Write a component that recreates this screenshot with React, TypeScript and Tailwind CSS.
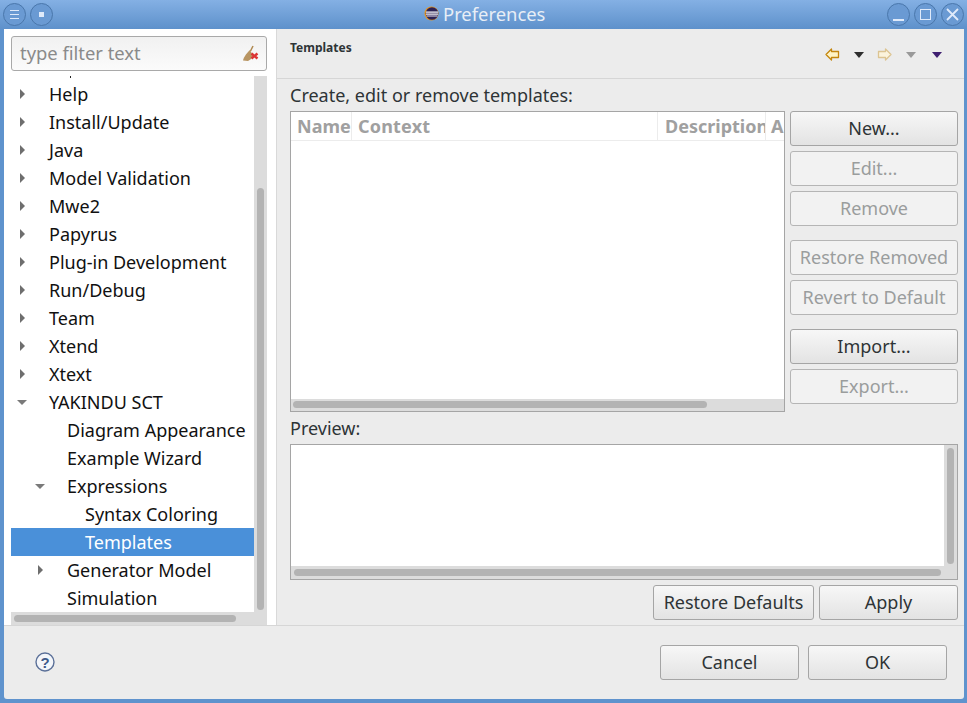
import React from "react";

const font = { fontFamily: '"Noto Sans", sans-serif' };

function WinBtn({ children }: { children: React.ReactNode }) {
  return (
    <div className="w-[23px] h-[23px] rounded-full border border-[#4a77ab] bg-[#6a9ad3] flex items-center justify-center">
      {children}
    </div>
  );
}

const Right = () => (
  <svg width="7" height="12" viewBox="0 0 7 12"><path d="M1 1l5 5-5 5z" fill="#6e6e6e" /></svg>
);
const Down = () => (
  <svg width="12" height="7" viewBox="0 0 12 7"><path d="M1 1h10L6 6z" fill="#7a7a7a" /></svg>
);

type Item = { t: string; lvl: 0 | 1 | 2; a?: "r" | "d"; sel?: boolean };
const items: Item[] = [
  { t: "Help", lvl: 0, a: "r" },
  { t: "Install/Update", lvl: 0, a: "r" },
  { t: "Java", lvl: 0, a: "r" },
  { t: "Model Validation", lvl: 0, a: "r" },
  { t: "Mwe2", lvl: 0, a: "r" },
  { t: "Papyrus", lvl: 0, a: "r" },
  { t: "Plug-in Development", lvl: 0, a: "r" },
  { t: "Run/Debug", lvl: 0, a: "r" },
  { t: "Team", lvl: 0, a: "r" },
  { t: "Xtend", lvl: 0, a: "r" },
  { t: "Xtext", lvl: 0, a: "r" },
  { t: "YAKINDU SCT", lvl: 0, a: "d" },
  { t: "Diagram Appearance", lvl: 1 },
  { t: "Example Wizard", lvl: 1 },
  { t: "Expressions", lvl: 1, a: "d" },
  { t: "Syntax Coloring", lvl: 2 },
  { t: "Templates", lvl: 2, sel: true },
  { t: "Generator Model", lvl: 1, a: "r" },
  { t: "Simulation", lvl: 1 },
];

function Row({ it }: { it: Item }) {
  const pad = it.lvl === 0 ? "pl-[38px]" : it.lvl === 1 ? "pl-[56px]" : "pl-[74px]";
  const arrowPos = it.lvl === 0 ? "left-[4px]" : "left-[22px]";
  return (
    <div className={`relative h-[28px] leading-[28px] whitespace-nowrap ${pad} ${it.sel ? "bg-[#4a90d9] text-white" : "text-[#111]"}`}>
      {it.a && (
        <span className={`absolute ${arrowPos} top-0 h-[28px] w-[14px] flex items-center justify-center`}>
          {it.a === "r" ? <Right /> : <Down />}
        </span>
      )}
      {it.t}
    </div>
  );
}

function Btn({ children, off, w = "w-full" }: { children: React.ReactNode; off?: boolean; w?: string }) {
  return (
    <div
      className={`${w} h-[35px] shrink-0 rounded-[3px] border flex items-center justify-center text-[18px] ${
        off
          ? "border-[#b5b5b5] bg-[#f2f2f2] text-[#9a9d9d]"
          : "border-[#a5a5a5] bg-gradient-to-b from-[#f7f7f7] to-[#e3e3e3] text-[#2e3436]"
      }`}
    >
      {children}
    </div>
  );
}

function Arrow({ dir, fill, stroke }: { dir: "l" | "r"; fill: string; stroke: string }) {
  return (
    <svg width="15" height="13" viewBox="0 0 15 13">
      <path
        d={dir === "l" ? "M6.5 1L1 6.5 6.5 12V9.5H13.5V3.5H6.5z" : "M8.5 1L14 6.5 8.5 12V9.5H1.5V3.5H8.5z"}
        fill={fill}
        stroke={stroke}
        strokeWidth="1.3"
        strokeLinejoin="round"
      />
    </svg>
  );
}

const Tri = ({ c }: { c: string }) => (
  <svg width="10" height="6" viewBox="0 0 10 6"><path d="M0 0h10L5 6z" fill={c} /></svg>
);

export default function App() {
  return (
    <div style={font} className="w-[967px] h-[703px] overflow-hidden bg-[#5f93cd] flex flex-col text-[18px]">
      <div className="h-[29px] shrink-0 bg-gradient-to-b from-[#84b0e4] to-[#5e91cb] flex items-center justify-between pl-[3px] pr-[3px] relative">
        <div className="flex gap-[4px]">
          <WinBtn>
            <div className="flex flex-col gap-[3px]">
              <div className="w-[9px] h-[1px] bg-[#dfeafa]" />
              <div className="w-[9px] h-[1px] bg-[#dfeafa]" />
              <div className="w-[9px] h-[1px] bg-[#dfeafa]" />
            </div>
          </WinBtn>
          <WinBtn><div className="w-[5px] h-[5px] bg-[#dfeafa]" /></WinBtn>
        </div>
        <div className="absolute left-[424px] top-0 h-[29px] flex items-center gap-[4px] text-[#e8eef6] text-[18.4px] leading-[27px] pb-[2px]">
          <svg width="15" height="15" viewBox="0 0 15 15">
            <circle cx="7.5" cy="7.5" r="7" fill="#e8961e" />
            <circle cx="8" cy="7.5" r="6.3" fill="#2c2255" />
            <rect x="2" y="5.5" width="12" height="1.2" fill="#fff" />
            <rect x="2" y="7.5" width="12" height="1.2" fill="#fff" />
            <rect x="2.5" y="9.5" width="11" height="1" fill="#e9e3f2" />
          </svg>
          Preferences
        </div>
        <div className="flex gap-[4px]">
          <WinBtn><div className="w-[11px] h-[2px] bg-[#dfeafa] mt-[11px]" /></WinBtn>
          <WinBtn><div className="w-[11px] h-[11px] border border-[#dfeafa]" /></WinBtn>
          <WinBtn>
            <svg width="13" height="13" viewBox="0 0 13 13"><path d="M1 1l11 11M12 1L1 12" stroke="#dfeafa" strokeWidth="1.8" /></svg>
          </WinBtn>
        </div>
      </div>

      <div className="flex-1 min-h-0 ml-[4px] mr-[3px] mb-[4px] bg-[#ececec] rounded-b-[3px] flex flex-col overflow-hidden">
        <div className="h-[597px] shrink-0 flex border-b border-[#d6d6d6]">
          <div className="w-[273px] shrink-0 bg-white border-r border-[#d9d9d9] pl-[7px] pr-[9px] pt-[7px] flex flex-col">
            <div className="h-[35px] shrink-0 rounded-[3px] border border-[#a9a9a9] bg-gradient-to-b from-[#f1f1f1] to-[#fbfbfb] flex items-center justify-between pl-[8px] pr-[7px] text-[#8a8a8a]">
              <span className="text-[18.4px] leading-[24px] mb-[2px]">type filter text</span>
              <svg width="17" height="17" viewBox="0 0 17 17">
                <path d="M1 15.5C2 11 6 7 8 5l3 5.5c0 2-2 4-5 5.5z" fill="#b89562" />
                <path d="M11 1L8.5 6" stroke="#b08a52" strokeWidth="1.5" />
                <path d="M9.5 8.5l6 5M15.5 8.5l-6 5" stroke="#dc3535" strokeWidth="2.4" />
              </svg>
            </div>
            <div className="mt-[5px] flex-1 min-h-0 flex flex-col">
              <div className="flex-1 min-h-0 flex">
                <div className="flex-1 min-w-0 overflow-hidden relative pt-[4px]">
                  <div className="absolute left-[59px] top-0 w-[1px] h-[2px] bg-[#222]" />
                  {items.map((it) => <Row key={it.t} it={it} />)}
                </div>
                <div className="w-[13px] shrink-0 bg-[#dcdcdc] pl-[3px] pr-[3px] pt-[112px] pb-[1px]">
                  <div className="w-[7px] h-[422px] rounded-full bg-[#b3b3b3]" />
                </div>
              </div>
              <div className="h-[13px] shrink-0 bg-[#dcdcdc] pl-[3px] pt-[3px]">
                <div className="w-[222px] h-[7px] rounded-full bg-[#b3b3b3]" />
              </div>
            </div>
          </div>

          <div className="flex-1 min-w-0 flex flex-col">
            <div className="h-[50px] shrink-0 border-b border-[#d6d6d6] flex items-start justify-between pl-[13px] pr-[22px]">
              <div className="text-[12px] font-bold text-[#2e3436] mt-[11px] leading-[16px]">Templates</div>
              <div className="flex items-center mt-[19px]">
                <Arrow dir="l" fill="#fff3c4" stroke="#c4860e" />
                <div className="ml-[14px]"><Tri c="#2e2e2e" /></div>
                <div className="ml-[13px]"><Arrow dir="r" fill="#fbf3dc" stroke="#dcc492" /></div>
                <div className="ml-[14px]"><Tri c="#999" /></div>
                <div className="ml-[16px]"><Tri c="#3f1f70" /></div>
              </div>
            </div>
            <div className="flex-1 min-h-0 pl-[13px] pr-[6px] flex flex-col">
              <div className="h-[32px] shrink-0 leading-[33px] text-[#2e3436]">Create, edit or remove templates:</div>
              <div className="flex gap-[5px] shrink-0">
                <div className="w-[495px] h-[301px] shrink-0 border border-[#a5a5a5] bg-white flex flex-col">
                  <div className="h-[29px] shrink-0 border-b border-[#ececec] flex font-bold text-[#a0a0a0] leading-[28px] overflow-hidden">
                    <div className="w-[61px] shrink-0 border-r border-[#ececec] pl-[6px] overflow-hidden">Name</div>
                    <div className="w-[306px] shrink-0 border-r border-[#ececec] pl-[6px] tracking-[0.2px]">Context</div>
                    <div className="w-[108px] shrink-0 border-r border-[#ececec] pl-[7px] overflow-hidden whitespace-nowrap">Description</div>
                    <div className="pl-[5px]">A</div>
                  </div>
                  <div className="flex-1" />
                  <div className="h-[12px] shrink-0 bg-[#dcdcdc] pl-[2px] pt-[2px]">
                    <div className="w-[414px] h-[7px] rounded-full bg-[#b3b3b3]" />
                  </div>
                </div>
                <div className="w-[168px] shrink-0 flex flex-col">
                  <Btn>New...</Btn>
                  <div className="mt-[5px]"><Btn off>Edit...</Btn></div>
                  <div className="mt-[5px]"><Btn off>Remove</Btn></div>
                  <div className="mt-[14px]"><Btn off>Restore Removed</Btn></div>
                  <div className="mt-[5px]"><Btn off>Revert to Default</Btn></div>
                  <div className="mt-[14px]"><Btn>Import...</Btn></div>
                  <div className="mt-[5px]"><Btn off>Export...</Btn></div>
                </div>
              </div>
              <div className="h-[32px] shrink-0 leading-[32px] text-[#2e3436]">Preview:</div>
              <div className="w-[668px] h-[136px] shrink-0 border border-[#a5a5a5] bg-white flex flex-col">
                <div className="flex-1 min-h-0 flex">
                  <div className="flex-1" />
                  <div className="w-[13px] shrink-0 bg-[#dcdcdc] pl-[3px] pt-[3px]">
                    <div className="w-[7px] h-[116px] rounded-full bg-[#b3b3b3]" />
                  </div>
                </div>
                <div className="h-[13px] shrink-0 bg-[#dcdcdc] pl-[3px] pt-[3px]">
                  <div className="w-[647px] h-[7px] rounded-full bg-[#b3b3b3]" />
                </div>
              </div>
              <div className="flex justify-end gap-[5px] mt-[5px]">
                <Btn w="w-[161px]">Restore Defaults</Btn>
                <Btn w="w-[139px]">Apply</Btn>
              </div>
            </div>
          </div>
        </div>
        <div className="flex-1 min-h-0 flex items-center justify-between pl-[31px] pr-[17px] pb-[1px]">
          <svg width="20" height="20" viewBox="0 0 20 20">
            <circle cx="10" cy="10" r="9" fill="#f4f6fa" stroke="#5c7199" strokeWidth="1.4" />
            <text x="10" y="15.5" textAnchor="middle" fontSize="15" fontWeight="700" fill="#3f5a8a" fontFamily="Liberation Sans">?</text>
          </svg>
          <div className="flex gap-[9px]">
            <Btn w="w-[139px]">Cancel</Btn>
            <Btn w="w-[139px]">OK</Btn>
          </div>
        </div>
      </div>
    </div>
  );
}
